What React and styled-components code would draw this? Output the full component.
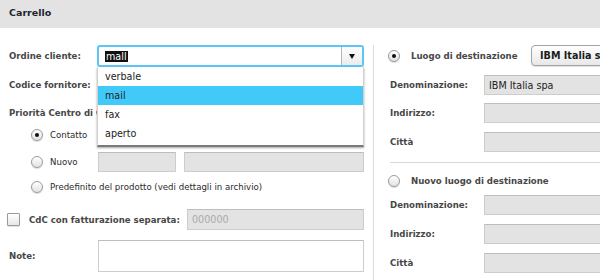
import React from "react";
import styled, { createGlobalStyle } from "styled-components";

const Global = createGlobalStyle`
  html, body { margin: 0; padding: 0; background: #fff; }
  body { font-family: "DejaVu Sans", Verdana, sans-serif; }
`;

const Page = styled.div`
  width: 600px;
  height: 280px;
  overflow: hidden;
  position: relative;
  background: #fff;
`;

const Header = styled.div`
  height: 28px;
  background: #e3e3e3;
  display: flex;
  align-items: center;
  padding-left: 9px;
  padding-bottom: 3px;
  box-sizing: border-box;
  font-weight: bold;
  font-size: 9.5px;
  color: #1c2530;
`;

const Body = styled.div`
  display: flex;
  padding-top: 17px;
  height: 252px;
  box-sizing: border-box;
`;

const LeftCol = styled.div`
  width: 355px;
  padding: 0 9px;
  flex-shrink: 0;
  display: flex;
  flex-direction: column;
`;

const Divider = styled.div`
  width: 1px;
  background: #dcdcdc;
  flex-shrink: 0;
  margin-bottom: -20px;
`;

const RightCol = styled.div`
  width: 280px;
  flex-shrink: 0;
  padding-left: 14px;
  display: flex;
  flex-direction: column;
`;

const Row = styled.div`
  display: grid;
  grid-template-columns: ${(p) => p.$label || 88}px 1fr;
  align-items: center;
  height: ${(p) => p.$h || 20}px;
  margin-top: ${(p) => p.$mt || 0}px;
  flex-shrink: 0;
`;

const Label = styled.div`
  font-weight: bold;
  font-size: 8.6px;
  color: #474747;
  white-space: nowrap;
  padding-left: ${(p) => p.$indent || 0}px;
`;

const Field = styled.div`
  height: ${(p) => p.$h || 20}px;
  box-sizing: border-box;
  background: ${(p) => (p.$white ? "#fff" : "#e3e3e3")};
  border: 1px solid #cdcdcd;
  border-top-color: #bdbdbd;
  font-size: 9.6px;
  color: ${(p) => (p.$muted ? "#aaa" : "#222")};
  display: flex;
  align-items: center;
  padding-left: 4px;
  white-space: nowrap;
`;

const FieldPair = styled.div`
  display: grid;
  grid-template-columns: 78px 1fr;
  gap: 8px;
  margin-left: 1px;
`;

const RadioLine = styled.div`
  display: flex;
  align-items: center;
  gap: ${(p) => p.$gap || 7}px;
  padding-left: ${(p) => p.$indent || 0}px;
  font-size: 8.6px;
  color: #2a2a2a;
  white-space: nowrap;
`;

const Radio = styled.span`
  width: 12px;
  height: 12px;
  box-sizing: border-box;
  border-radius: 50%;
  border: 1px solid #9a9a9a;
  background: linear-gradient(#ffffff, #e2e2e2);
  box-shadow: 0 1px 1px rgba(0, 0, 0, 0.15);
  display: inline-flex;
  align-items: center;
  justify-content: center;
  flex-shrink: 0;
  &::after {
    content: "";
    width: 4px;
    height: 4px;
    border-radius: 50%;
    background: ${(p) => (p.$checked ? "#111" : "transparent")};
  }
`;

const Checkbox = styled.span`
  width: 13px;
  height: 13px;
  box-sizing: border-box;
  border: 1px solid #9a9a9a;
  border-radius: 1px;
  background: linear-gradient(#ffffff, #e6e6e6);
  box-shadow: 0 1px 1px rgba(0, 0, 0, 0.12);
  margin-left: -2px;
  flex-shrink: 0;
`;

const SelectWrap = styled.div`
  position: relative;
  height: 22px;
`;

const SelectBox = styled.div`
  height: 22px;
  box-sizing: border-box;
  border: 2px solid #5cc6f6;
  border-radius: 3px;
  background: #fff;
  display: flex;
  align-items: stretch;
`;

const SelectText = styled.div`
  flex: 1;
  display: flex;
  align-items: center;
  padding-left: 6px;
  font-size: 9.6px;
  color: #111;
`;

const Selection = styled.span`
  background: #111;
  color: #fff;
  padding: 0 1px;
  line-height: 11px;
`;

const ArrowBtn = styled.div`
  width: 20px;
  border-left: 1px solid #b5b5b5;
  background: linear-gradient(#ffffff, #ececec);
  display: flex;
  align-items: center;
  justify-content: center;
  &::after {
    content: "";
    border-left: 3.5px solid transparent;
    border-right: 3.5px solid transparent;
    border-top: 5px solid #111;
    margin-top: 1px;
  }
`;

const Dropdown = styled.ul`
  position: absolute;
  top: 22px;
  left: 0;
  right: 0;
  margin: 0;
  padding: 0 0 2px;
  list-style: none;
  background: #fff;
  border-left: 1px solid #d0d0d0;
  border-right: 1px solid #d0d0d0;
  border-bottom: 2px solid #7a7a7a;
  box-shadow: 0 1px 2px rgba(0, 0, 0, 0.35);
  z-index: 5;
`;

const Option = styled.li`
  height: 19px;
  display: flex;
  align-items: center;
  padding-left: 7px;
  font-size: 9.6px;
  color: #222;
  background: ${(p) => (p.$active ? "#40c9f9" : "transparent")};
`;

const Button = styled.div`
  height: 21px;
  box-sizing: border-box;
  border: 1px solid #a3a3a3;
  border-radius: 4px;
  background: linear-gradient(#ffffff, #e8e8e8);
  box-shadow: 0 1px 1px rgba(0, 0, 0, 0.12);
  display: flex;
  align-items: center;
  padding-left: 8px;
  font-weight: bold;
  font-size: 9.6px;
  color: #1c1c1c;
  white-space: nowrap;
  width: 120px;
`;

const RightTop = styled.div`
  display: flex;
  align-items: center;
  justify-content: space-between;
  height: 21px;
  width: 263px;
  flex-shrink: 0;
`;

const Rule = styled.div`
  height: 1px;
  background: #d6d6d6;
  margin: ${(p) => p.$mt || 0}px 0 0 2px;
  flex-shrink: 0;
`;

const options = ["verbale", "mail", "fax", "aperto"];

export default function App() {
  return (
    <Page>
      <Global />
      <Header>Carrello</Header>
      <Body>
        <LeftCol>
          <Row $h={22}>
            <Label>Ordine cliente:</Label>
            <SelectWrap>
              <SelectBox>
                <SelectText>
                  <Selection>mall</Selection>
                </SelectText>
                <ArrowBtn />
              </SelectBox>
              <Dropdown>
                {options.map((o) => (
                  <Option key={o} $active={o === "mail"}>
                    {o}
                  </Option>
                ))}
              </Dropdown>
            </SelectWrap>
          </Row>
          <Row $mt={8}>
            <Label>Codice fornitore:</Label>
            <Field />
          </Row>
          <Row $mt={9} $h={18}>
            <Label>Priorità Centro di Contatto:</Label>
          </Row>
          <Row $mt={3}>
            <RadioLine $indent={22}>
              <Radio $checked />
              Contatto
            </RadioLine>
            <Field />
          </Row>
          <Row $mt={7}>
            <RadioLine $indent={22}>
              <Radio />
              Nuovo
            </RadioLine>
            <FieldPair>
              <Field />
              <Field />
            </FieldPair>
          </Row>
          <Row $mt={6} $h={18} $label={355}>
            <RadioLine $indent={22}>
              <Radio />
              Predefinito del prodotto (vedi dettagli in archivio)
            </RadioLine>
          </Row>
          <Row $mt={13} $h={21} $label={178}>
            <RadioLine $gap={9}>
              <Checkbox />
              <Label>CdC con fatturazione separata:</Label>
            </RadioLine>
            <Field $h={21} $muted>
              000000
            </Field>
          </Row>
          <Row $mt={10} $h={32}>
            <Label>Note:</Label>
            <Field $h={32} $white style={{ marginLeft: 1 }} />
          </Row>
        </LeftCol>
        <Divider />
        <RightCol>
          <RightTop>
            <RadioLine $gap={11}>
              <Radio $checked />
              <Label>Luogo di destinazione</Label>
            </RadioLine>
            <Button>IBM Italia spa</Button>
          </RightTop>
          <Row $mt={9} $label={96}>
            <Label $indent={2}>Denominazione:</Label>
            <Field>IBM Italia spa</Field>
          </Row>
          <Row $mt={8} $label={96}>
            <Label $indent={2}>Indirizzo:</Label>
            <Field />
          </Row>
          <Row $mt={9} $label={96}>
            <Label $indent={2}>Città</Label>
            <Field />
          </Row>
          <Rule $mt={10} />
          <Row $mt={9} $h={18} $label={260}>
            <RadioLine $gap={11}>
              <Radio />
              <Label>Nuovo luogo di destinazione</Label>
            </RadioLine>
          </Row>
          <Row $mt={5} $label={96}>
            <Label $indent={2}>Denominazione:</Label>
            <Field />
          </Row>
          <Row $mt={9} $label={96}>
            <Label $indent={2}>Indirizzo:</Label>
            <Field />
          </Row>
          <Row $mt={9} $label={96}>
            <Label $indent={2}>Città</Label>
            <Field />
          </Row>
        </RightCol>
      </Body>
    </Page>
  );
}
